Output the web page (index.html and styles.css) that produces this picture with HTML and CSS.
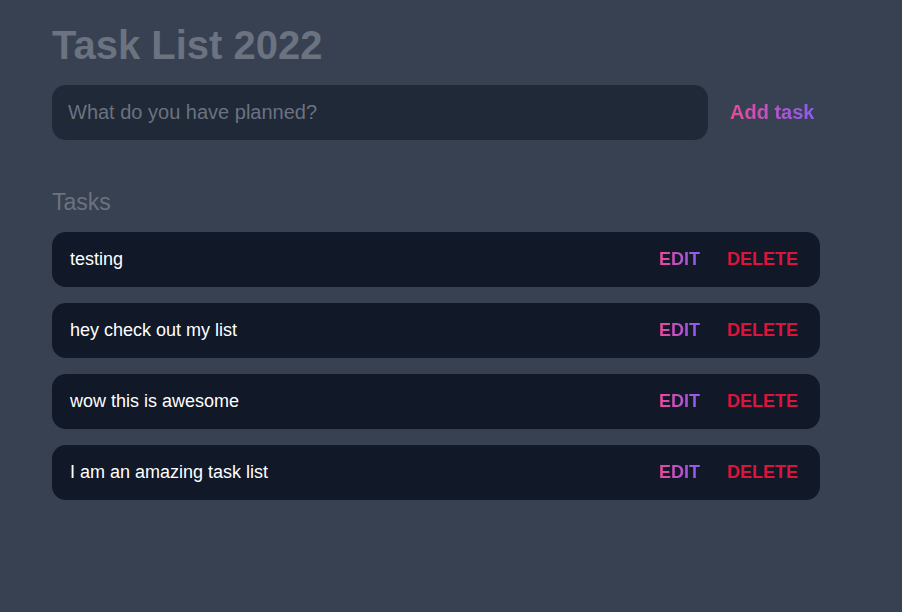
FILE: index.html
```html
<!DOCTYPE html>
<html lang="en">
<head>
<meta charset="utf-8">
<title>Task List 2022</title>
<link rel="stylesheet" href="styles.css">
</head>
<body>
<main class="app">
  <h1 class="title">Task List 2022</h1>
  <form class="new-task">
    <input class="new-task-input" type="text" placeholder="What do you have planned?">
    <button class="add-btn" type="button">Add task</button>
  </form>
  <section class="tasks">
    <h2 class="tasks-heading">Tasks</h2>
    <div class="task-list">
      <div class="task">
        <span class="task-text">testing</span>
        <div class="actions"><button class="edit">Edit</button><button class="delete">Delete</button></div>
      </div>
      <div class="task">
        <span class="task-text">hey check out my list</span>
        <div class="actions"><button class="edit">Edit</button><button class="delete">Delete</button></div>
      </div>
      <div class="task">
        <span class="task-text">wow this is awesome</span>
        <div class="actions"><button class="edit">Edit</button><button class="delete">Delete</button></div>
      </div>
      <div class="task">
        <span class="task-text">I am an amazing task list</span>
        <div class="actions"><button class="edit">Edit</button><button class="delete">Delete</button></div>
      </div>
    </div>
  </section>
</main>
</body>
</html>
```
FILE: styles.css
```css
* { box-sizing: border-box; }
html, body { margin: 0; padding: 0; }
body {
  background: #374151;
  font-family: "Liberation Sans", Arial, sans-serif;
  color: #fff;
  min-height: 100vh;
}
.app {
  padding: 22px 0 0 52px;
  width: 820px;
}
.title {
  margin: 0;
  font-size: 40px;
  font-weight: 700;
  color: #6b7280;
  line-height: 46px;
}
.new-task {
  display: flex;
  align-items: center;
  margin-top: 17px;
}
.new-task-input {
  width: 656px;
  height: 55px;
  border: none;
  outline: none;
  border-radius: 14px;
  background: #1f2937;
  padding: 0 16px;
  font-family: inherit;
  font-size: 20px;
  color: #fff;
}
.new-task-input::placeholder { color: #6b7280; }
.add-btn {
  margin-left: 22px;
  border: none;
  background: linear-gradient(90deg, #ec4899, #8b5cf6);
  -webkit-background-clip: text;
  background-clip: text;
  color: transparent;
  font-family: inherit;
  font-size: 20px;
  font-weight: 700;
  padding: 0;
  cursor: pointer;
}
.tasks { margin-top: 48px; }
.tasks-heading {
  margin: 0;
  font-size: 23px;
  font-weight: 400;
  color: #6b7280;
  line-height: 28px;
}
.task-list {
  margin-top: 16px;
  display: flex;
  flex-direction: column;
  gap: 16px;
}
.task {
  display: flex;
  align-items: center;
  justify-content: space-between;
  width: 768px;
  height: 55px;
  background: #111827;
  border-radius: 14px;
  padding: 0 22px 0 18px;
}
.task-text { font-size: 18px; color: #fff; }
.actions { display: flex; gap: 27px; }
.actions button {
  border: none;
  padding: 0;
  background: none;
  font-family: inherit;
  font-size: 18px;
  font-weight: 700;
  text-transform: uppercase;
  cursor: pointer;
}
.actions .edit {
  background: linear-gradient(90deg, #ec4899, #8b5cf6);
  -webkit-background-clip: text;
  background-clip: text;
  color: transparent;
}
.actions .delete { color: #dc143c; }
```
